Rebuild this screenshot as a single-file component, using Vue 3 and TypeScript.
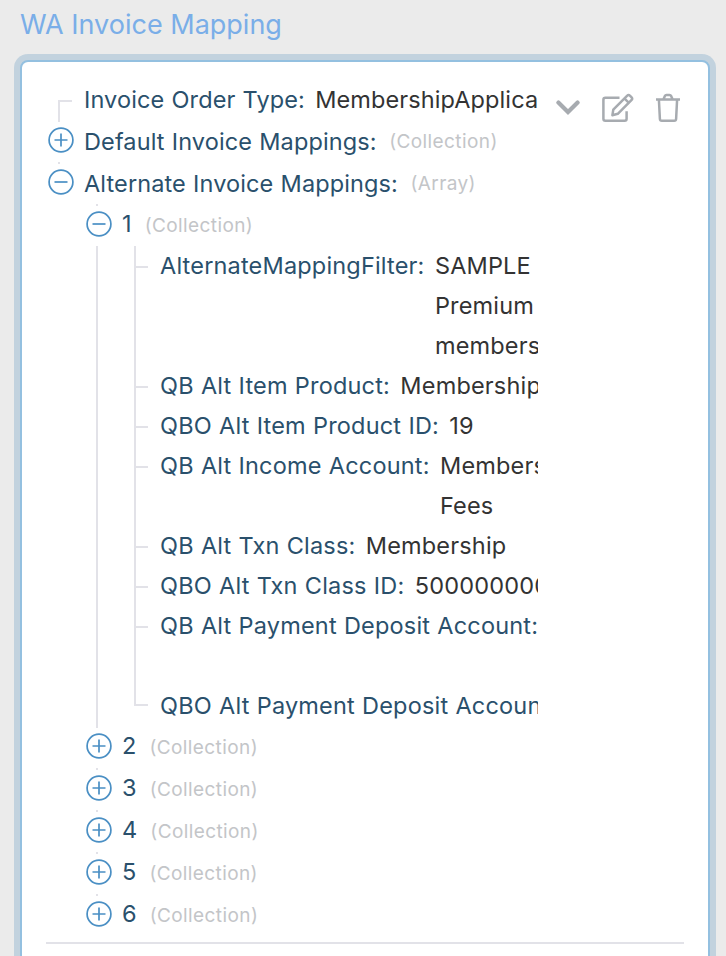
<script setup lang="ts">
type Leaf = { label: string; lines: string[] }
type Branch = { label: string; kind: string; open: boolean }

const roots: Branch[] = [
  { label: 'Default Invoice Mappings:', kind: '(Collection)', open: false },
  { label: 'Alternate Invoice Mappings:', kind: '(Array)', open: true },
]

const leaves: Leaf[] = [
  { label: 'AlternateMappingFilter:', lines: ['SAMPLE', 'Premium', 'members'] },
  { label: 'QB Alt Item Product:', lines: ['Membership'] },
  { label: 'QBO Alt Item Product ID:', lines: ['19'] },
  { label: 'QB Alt Income Account:', lines: ['Members', 'Fees'] },
  { label: 'QB Alt Txn Class:', lines: ['Membership'] },
  { label: 'QBO Alt Txn Class ID:', lines: ['5000000000'] },
  { label: 'QB Alt Payment Deposit Account:', lines: ['', ''] },
  { label: 'QBO Alt Payment Deposit Account', lines: [''] },
]

const items: Branch[] = ['1', '2', '3', '4', '5', '6'].map((label) => ({
  label,
  kind: '(Collection)',
  open: label === '1',
}))
</script>

<template>
  <main class="page">
    <h1 class="title">WA Invoice Mapping</h1>
    <section class="panel">
      <div class="entry">
        <div class="tree">
          <div class="row root-leaf">
            <i class="corner"></i>
            <span class="label">Invoice Order Type:</span>
            <span class="value">MembershipApplica</span>
          </div>
          <div v-for="(r, i) in roots" :key="r.label" class="row branch" :class="{ dotted: i > 0 }">
            <svg class="toggle" viewBox="0 0 26 26">
              <circle cx="13" cy="13" r="11.9" />
              <path :d="r.open ? 'M6.5 13h13' : 'M6.5 13h13M13 6.5v13'" />
            </svg>
            <span class="label">{{ r.label }}</span>
            <span class="kind">{{ r.kind }}</span>
          </div>
          <div class="items">
            <template v-for="item in items" :key="item.label">
              <div class="row branch item dotted">
                <svg class="toggle" viewBox="0 0 26 26">
                  <circle cx="13" cy="13" r="11.9" />
                  <path :d="item.open ? 'M6.5 13h13' : 'M6.5 13h13M13 6.5v13'" />
                </svg>
                <span class="label">{{ item.label }}</span>
                <span class="kind">{{ item.kind }}</span>
              </div>
              <div v-if="item.open" class="leaves">
                <div v-for="leaf in leaves" :key="leaf.label" class="leaf">
                  <span class="label">{{ leaf.label }}</span>
                  <span class="value">
                    <span v-for="(line, n) in leaf.lines" :key="n" class="line">{{ line }}</span>
                  </span>
                </div>
              </div>
            </template>
          </div>
        </div>
        <div class="actions">
          <svg class="chevron" viewBox="0 0 24 16"><path d="M2.4 3.6 12 13l9.6-9.4" /></svg>
          <svg class="edit" viewBox="0 0 32 30">
            <path d="M17.5 4.8H3.4a2 2 0 0 0-2 2v19a2 2 0 0 0 2 2h19.2a2 2 0 0 0 2-2v-7.5" />
            <path d="M10.4 22.2l.9-5.6L25 2.8a2.2 2.2 0 0 1 3.1 0l1.3 1.3a2.2 2.2 0 0 1 0 3.1L15.8 20.8z" />
            <path d="M22.4 5.4l4.5 4.5" />
          </svg>
          <svg class="trash" viewBox="0 0 24 30">
            <path d="M0 6.6h24M7.4 6.2l1.5-3.3a1.8 1.8 0 0 1 1.6-1h3a1.8 1.8 0 0 1 1.6 1l1.5 3.3" />
            <path d="M2.9 6.6l1 19.4a1.9 1.9 0 0 0 1.9 1.8h12.4a1.9 1.9 0 0 0 1.9-1.8l1-19.4" />
          </svg>
        </div>
      </div>
    </section>
  </main>
</template>

<style>
body {
  margin: 0;
  background: #ebebeb;
}
</style>

<style scoped>
.page {
  box-sizing: border-box;
  height: 956px;
  padding: 0 16px 0 20px;
  overflow: hidden;
  font-family: Inter, 'Liberation Sans', sans-serif;
}
.title {
  margin: 0 0 10px;
  height: 50px;
  line-height: 49px;
  font-size: 27px;
  font-weight: 400;
  color: #7aaee8;
}
.panel {
  box-sizing: border-box;
  height: 940px;
  padding: 18px 24px;
  background: #fff;
  border: 2px solid #94c0e0;
  border-radius: 8px;
  box-shadow: 0 0 0 6px #c2d2de;
}
.entry {
  box-sizing: border-box;
  height: 864px;
  display: flex;
  border-bottom: 2px solid #e2e2e8;
}
.tree {
  width: 492px;
  overflow: hidden;
  font-size: 23.5px;
  font-weight: 400;
  line-height: 40px;
  letter-spacing: 0.18px;
  word-spacing: 0.4px;
  white-space: nowrap;
}
.row {
  display: flex;
  padding-left: 2px;
  letter-spacing: 0.12px;
}
.root-leaf {
  height: 40px;
}
.corner {
  box-sizing: border-box;
  width: 14px;
  height: 22px;
  flex: none;
  margin: 20px 12px 0 10px;
  border-top: 2px solid #e2e2e8;
  border-left: 2px solid #e2e2e8;
}
.branch {
  height: 42px;
  line-height: 44px;
}
.dotted {
  background: linear-gradient(#e2e2e8, #e2e2e8) 12px 0 / 2px 2px no-repeat;
}
.toggle {
  width: 26px;
  height: 26px;
  flex: none;
  margin: 7.4px 10px 0 0;
  fill: none;
  stroke: #4a8fc4;
  stroke-width: 1.7;
}
.label {
  color: #2a506c;
}
.value {
  color: #333;
  margin-left: 10.3px;
}
.root-leaf .value {
  letter-spacing: 0.1px;
}
.kind {
  margin-left: 12.5px;
  font-size: 19px;
  color: #c3c5c8;
  letter-spacing: 0.4px;
}
.items {
  padding-left: 38px;
}
.item {
  line-height: 40px;
}
.item .kind {
  line-height: 43px;
  margin-left: 13px;
}
.leaves {
  padding-left: 38px;
  background: linear-gradient(#e2e2e8, #e2e2e8) 12px 0 / 2px 100% no-repeat;
}
.leaf {
  display: flex;
  padding-left: 38px;
  background:
    linear-gradient(#e2e2e8, #e2e2e8) 12px 0 / 2px 100% no-repeat,
    linear-gradient(#e2e2e8, #e2e2e8) 12px 20px / 14px 2px no-repeat;
}
.leaf:last-child {
  background:
    linear-gradient(#e2e2e8, #e2e2e8) 12px 0 / 2px 20px no-repeat,
    linear-gradient(#e2e2e8, #e2e2e8) 12px 18px / 14px 2px no-repeat;
}
.line {
  display: block;
  min-height: 40px;
}
.actions {
  display: flex;
  align-items: flex-start;
  padding-left: 18px;
}
.actions svg {
  fill: none;
  stroke: #a7abb0;
  stroke-width: 2.5;
  stroke-linejoin: round;
}
.chevron {
  width: 24px;
  height: 16px;
  margin-top: 19px;
}
.actions .chevron {
  stroke-width: 4.2;
  stroke-linecap: round;
  stroke-linejoin: miter;
}
.edit {
  width: 32px;
  height: 30px;
  margin: 13px 0 0 22px;
}
.trash {
  width: 24px;
  height: 30px;
  margin: 13px 0 0 22px;
}
</style>
